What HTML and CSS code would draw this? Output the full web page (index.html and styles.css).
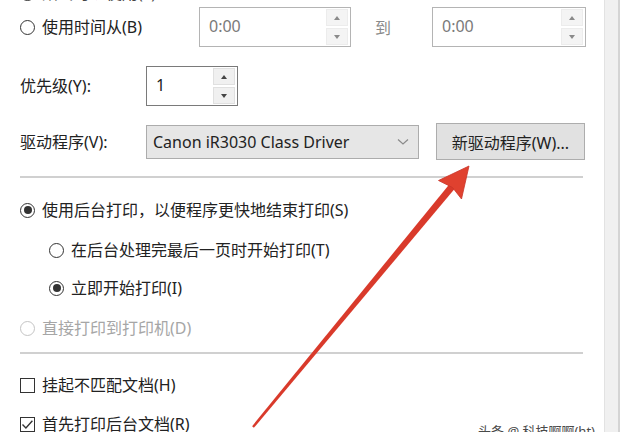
FILE: index.html
```html
<!DOCTYPE html>
<html lang="zh-CN">
<head>
<meta charset="utf-8">
<title>打印机属性 - 高级</title>
<link rel="stylesheet" href="styles.css">
</head>
<body>
<div class="page">
  <div class="main">
    <div class="row row-top">
      <span class="radio checked"></span><span class="label">始终可以使用(L)</span>
    </div>

    <div class="row row-time">
      <div class="lab lab-time"><span class="radio"></span><span class="label">使用时间从(B)</span></div>
      <div class="spin spin-time disabled">
        <span class="val">0:00</span>
        <span class="btns"><span class="sb up"></span><span class="sb down"></span></span>
      </div>
      <span class="to">到</span>
      <div class="spin spin-time2 disabled">
        <span class="val">0:00</span>
        <span class="btns"><span class="sb up"></span><span class="sb down"></span></span>
      </div>
    </div>

    <div class="row row-prio">
      <div class="lab lab-wide"><span class="label">优先级(Y):</span></div>
      <div class="spin spin-prio">
        <span class="val">1</span>
        <span class="btns"><span class="sb up"></span><span class="sb down"></span></span>
      </div>
    </div>

    <div class="row row-driver">
      <div class="lab lab-wide"><span class="label">驱动程序(V):</span></div>
      <div class="combo">
        <span class="combo-text">Canon iR3030 Class Driver</span>
        <svg class="chev" width="12" height="8" viewBox="0 0 12 8"><path d="M1 1.5 L6 6 L11 1.5" fill="none" stroke="#8a8a8a" stroke-width="1.2"/></svg>
      </div>
      <div class="button">新驱动程序(W)...</div>
    </div>

    <div class="sep sep1"></div>

    <div class="row opt r1"><span class="radio checked"></span><span class="label">使用后台打印，以便程序更快地结束打印(S)</span></div>
    <div class="row opt r2 indent"><span class="radio"></span><span class="label">在后台处理完最后一页时开始打印(T)</span></div>
    <div class="row opt r3 indent"><span class="radio checked"></span><span class="label">立即开始打印(I)</span></div>
    <div class="row opt r4 dis"><span class="radio"></span><span class="label">直接打印到打印机(D)</span></div>

    <div class="sep sep2"></div>

    <div class="row opt c1"><span class="check"></span><span class="label">挂起不匹配文档(H)</span></div>
    <div class="row opt c2"><span class="check on"><svg width="15" height="15" viewBox="0 0 15 15"><path d="M2.5 7.6 L5.9 11 L12.4 3.8" fill="none" stroke="#333" stroke-width="1.4"/></svg></span><span class="label">首先打印后台文档(R)</span></div>
  </div>
  <div class="strip"></div>

  <svg class="arrow" width="620" height="432" viewBox="0 0 620 432">
    <polygon points="253.9,427.8 252.1,426.2 451.2,182.0 456.6,186.6" fill="#d93a2b"/>
    <polygon points="469,166 461.5,199 452.5,187.5 438.5,180.5" fill="#e0412f" stroke="#c9352a" stroke-width="0.8" stroke-linejoin="round"/>
  </svg>
  <div class="watermark">头条 @ 科技啊啊(ht)</div>
</div>
</body>
</html>
```

FILE: styles.css
```css
html, body {
  margin: 0;
  padding: 0;
  background: #ffffff;
}
body {
  font-family: "Noto Sans", "Noto Sans CJK SC", sans-serif;
  font-size: 16px;
  color: #222222;
}
.page {
  position: relative;
  display: flex;
  width: 620px;
  height: 432px;
  overflow: hidden;
}
.main {
  width: 604px;
  padding-left: 20px;
  box-sizing: border-box;
}
.strip {
  width: 16px;
  box-sizing: border-box;
  background: #f0f0f0;
  border-left: 1px solid #e2e2e2;
  border-right: 2px solid #d4d4d4;
}
.row {
  display: flex;
  align-items: center;
}
.label {
  line-height: 20px;
  white-space: nowrap;
}
.radio {
  width: 15px;
  height: 15px;
  box-sizing: border-box;
  border: 1px solid #333333;
  border-radius: 50%;
  flex: none;
  margin-right: 7px;
  display: flex;
  align-items: center;
  justify-content: center;
}
.radio.checked::after {
  content: "";
  width: 8px;
  height: 8px;
  border-radius: 50%;
  background: #333333;
}
.check {
  width: 15px;
  height: 15px;
  box-sizing: border-box;
  border: 1px solid #333333;
  flex: none;
  margin-right: 7px;
  display: flex;
}
.check svg { margin: -1px; }

.row-top {
  height: 20px;
  margin-top: -17px;
}
.row-top .label { color: #444; }

.row-time {
  height: 40px;
  margin-top: 4px;
}
.lab-time { display: flex; align-items: center; width: 179px; }
.lab-wide { width: 126px; }

.spin {
  position: relative;
  height: 40px;
  box-sizing: border-box;
  border: 1px solid #7a7a7a;
  background: #fff;
  display: flex;
  align-items: center;
}
.spin.disabled { border-color: #b4b4b4; }
.spin .val {
  padding-left: 9px;
  flex: 1;
  line-height: 20px;
  margin-top: -2px;
}
.spin.disabled .val { color: #7a7a7a; }
.spin-time { width: 152px; }
.spin-time2 { width: 154px; }
.spin-prio { width: 92px; }
.btns {
  display: flex;
  flex-direction: column;
  gap: 2px;
  width: 22px;
  height: 36px;
  margin-right: 2px;
}
.sb {
  flex: 1;
  background: #f0f0f0;
  border: 1px solid #e0e0e0;
  display: flex;
  align-items: center;
  justify-content: center;
}
.spin.disabled .sb { background: #f4f4f4; border-color: #ececec; }
.sb.up::after {
  content: "";
  border-left: 3px solid transparent;
  border-right: 3px solid transparent;
  border-bottom: 4px solid #444;
}
.sb.down::after {
  content: "";
  border-left: 3px solid transparent;
  border-right: 3px solid transparent;
  border-top: 4px solid #444;
}
.spin.disabled .sb.up::after { border-bottom-color: #8a8a8a; }
.spin.disabled .sb.down::after { border-top-color: #8a8a8a; }

.to {
  color: #8a8a8a;
  margin-left: 24px;
  margin-right: 41px;
  width: 16px;
}

.row-prio {
  height: 40px;
  margin-top: 19px;
}

.row-driver {
  height: 37px;
  margin-top: 17px;
}
.combo {
  width: 273px;
  height: 34px;
  box-sizing: border-box;
  border: 1px solid #acacac;
  background: #e6e6e6;
  display: flex;
  align-items: center;
  padding: 0 9px 0 6px;
}
.combo-text { flex: 1; color: #222; white-space: nowrap; }
.button {
  margin-left: 17px;
  width: 149px;
  height: 37px;
  box-sizing: border-box;
  border: 1px solid #adadad;
  background: #e1e1e1;
  display: flex;
  align-items: center;
  justify-content: center;
  white-space: nowrap;
  color: #222;
}

.sep {
  width: 563px;
  height: 0;
  border-top: 2px solid #d0d0d0;
}
.sep1 { margin-top: 16px; }
.opt { height: 24px; }
.r1 { margin-top: 20px; }
.r2 { margin-top: 16px; }
.r3 { margin-top: 14px; }
.r4 { margin-top: 16px; }
.indent { padding-left: 29px; }
.dis .radio { border-color: #c4c4c4; }
.dis .label { color: #a6a6a6; }
.sep2 { margin-top: 12px; }
.c1 { margin-top: 19px; }
.c2 { margin-top: 15px; }

.arrow {
  position: absolute;
  left: 0;
  top: 0;
  pointer-events: none;
}
.watermark {
  position: absolute;
  left: 478px;
  top: 421px;
  font-size: 13px;
  color: #4a4a4a;
  white-space: nowrap;
}
```
